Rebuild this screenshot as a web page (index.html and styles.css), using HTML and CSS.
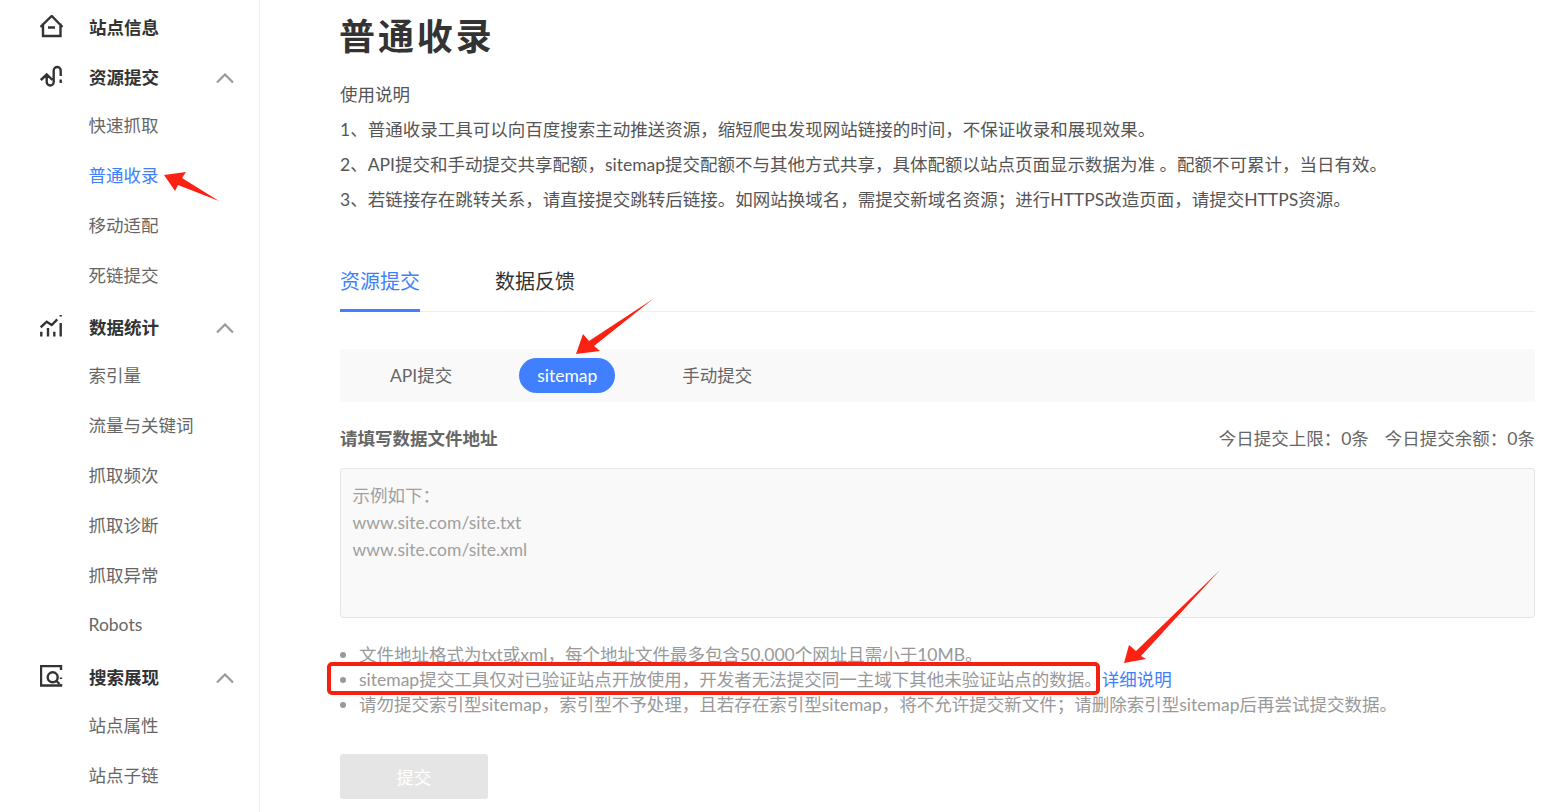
FILE: index.html
```html
<!DOCTYPE html>
<html lang="zh-CN">
<head>
<meta charset="utf-8">
<title>普通收录</title>
<link rel="stylesheet" href="styles.css">
</head>
<body>
<div class="page">
  <aside class="sidebar">
    <div class="nav-row nav-head">
      <svg class="nav-icon" viewBox="0 0 24 24"><path d="M.5 12 11.700 1 22.500 12M3 8.500V21h17.500V8.500M8 12.500h7" /></svg>
      <span>站点信息</span>
    </div>
    <div class="nav-row nav-head">
      <svg class="nav-icon" viewBox="0 0 24 24"><path d="M.8 15 6.700 9.500 12.500 15M6.700 10v7a3.500 3.500 0 0 0 7 0V5.500a3.500 3.500 0 0 1 7 0V11M20.700 14.500V18" /></svg>
      <span>资源提交</span>
      <svg class="chevron" viewBox="0 0 18 10"><path d="M1 9.500 9 1.500l8 8" /></svg>
    </div>
    <div class="nav-row nav-sub">快速抓取</div>
    <div class="nav-row nav-sub nav-active">普通收录</div>
    <div class="nav-row nav-sub">移动适配</div>
    <div class="nav-row nav-sub">死链提交</div>
    <div class="nav-row nav-head">
      <svg class="nav-icon" viewBox="0 0 24 24"><path d="M.7 12.300 6.700 6.700 11.700 10 17.300 4.300M1.300 16.700v4.800M8 13v8.500M14.300 16.700v4.800M20.700 8v13.500M20.700 0v1.500" /></svg>
      <span>数据统计</span>
      <svg class="chevron" viewBox="0 0 18 10"><path d="M1 9.500 9 1.500l8 8" /></svg>
    </div>
    <div class="nav-row nav-sub">索引量</div>
    <div class="nav-row nav-sub">流量与关键词</div>
    <div class="nav-row nav-sub">抓取频次</div>
    <div class="nav-row nav-sub">抓取诊断</div>
    <div class="nav-row nav-sub">抓取异常</div>
    <div class="nav-row nav-sub">Robots</div>
    <div class="nav-row nav-head">
      <svg class="nav-icon" viewBox="0 0 24 24"><path d="M21 5V1H1v19.500h20V19" /><circle cx="12.700" cy="12.300" r="5" /><path d="M16.500 16l3 3M21 12.500V14" /></svg>
      <span>搜索展现</span>
      <svg class="chevron" viewBox="0 0 18 10"><path d="M1 9.500 9 1.500l8 8" /></svg>
    </div>
    <div class="nav-row nav-sub">站点属性</div>
    <div class="nav-row nav-sub">站点子链</div>
  </aside>

  <main class="content">
    <h1 class="title">普通收录</h1>
    <div class="intro">
      <p>使用说明</p>
      <p>1、普通收录工具可以向百度搜索主动推送资源，缩短爬虫发现网站链接的时间，不保证收录和展现效果。</p>
      <p>2、API提交和手动提交共享配额，sitemap提交配额不与其他方式共享，具体配额以站点页面显示数据为准 。配额不可累计，当日有效。</p>
      <p>3、若链接存在跳转关系，请直接提交跳转后链接。如网站换域名，需提交新域名资源；进行HTTPS改造页面，请提交HTTPS资源。</p>
    </div>

    <div class="tabs">
      <div class="tab tab-active">资源提交</div>
      <div class="tab">数据反馈</div>
    </div>

    <div class="subtabs">
      <div class="subtab subtab-api">API提交</div>
      <div class="subtab subtab-on">sitemap</div>
      <div class="subtab subtab-manual">手动提交</div>
    </div>

    <div class="form-head">
      <strong class="form-label">请填写数据文件地址</strong>
      <div class="quota"><span>今日提交上限：0条</span><span>今日提交余额：0条</span></div>
    </div>

    <textarea class="addr" placeholder="示例如下：&#10;www.site.com/site.txt&#10;www.site.com/site.xml"></textarea>

    <ul class="notes">
      <li>文件地址格式为txt或xml，每个地址文件最多包含50,000个网址且需小于10MB。</li>
      <li>sitemap提交工具仅对已验证站点开放使用，开发者无法提交同一主域下其他未验证站点的数据。<a class="link">详细说明</a></li>
      <li>请勿提交索引型sitemap，索引型不予处理，且若存在索引型sitemap，将不允许提交新文件；请删除索引型sitemap后再尝试提交数据。</li>
    </ul>

    <button class="submit" disabled>提交</button>
  </main>

  <svg class="marks" viewBox="0 0 1554 812">
    <path class="mark-fill" d="M164 175 186 172 182 178 219 201 178 185 175 191Z" />
    <path class="mark-fill" d="M576 354 583 334 589 341 653 299 594 346 600 351Z" />
    <path class="mark-fill" d="M1124 663 1129 645 1136 651 1220 570 1141 656 1146 659Z" />
    <rect class="mark-box" x="329" y="664" width="769" height="29" rx="3" />
  </svg>
</div>
</body>
</html>
```
FILE: styles.css
```css
* { box-sizing: border-box; }
html, body { margin: 0; height: 100%; overflow: hidden; background: #fff; }
body { font-family: Lato, "Noto Sans CJK SC", "Liberation Sans", sans-serif; font-size: 17.5px; color: #333; }

.page { position: relative; display: flex; width: 1554px; height: 812px; overflow: hidden; }

.sidebar { flex: none; width: 260px; height: 812px; padding-top: 2px; border-right: 1px solid #eee; }
.nav-row { display: flex; align-items: center; height: 50px; padding-left: 89px; position: relative; }
.nav-head { font-weight: 700; color: #333; padding-bottom: 1px; }
.nav-sub { color: #666; padding-bottom: 5px; padding-left: 88.500px; }
.nav-active { color: #4080ff; }
.nav-icon { position: absolute; left: 40px; top: 13px; width: 24px; height: 24px; fill: none; stroke: #333; stroke-width: 2.400; }
.chevron { position: absolute; left: 216px; top: 21px; width: 18px; height: 10px; fill: none; stroke: #999; stroke-width: 2.200; }

.content { flex: none; width: 1195px; margin-left: 80px; }
.title { margin: 7px 0 0 -1px; font-size: 36px; line-height: 58px; letter-spacing: 2.900px; font-weight: 700; color: #333; }
.intro { margin-top: 12px; }
.intro p { margin: 0; height: 35px; line-height: 35px; color: #555; white-space: nowrap; }

.tabs { display: flex; gap: 75px; height: 64px; margin-top: 31px; border-bottom: 1px solid #eee; }
.tab { height: 64px; padding-top: 18px; font-size: 20px; line-height: 30px; color: #333; }
.tab-active { color: #4080ff; border-bottom: 3px solid #4080ff; }

.subtabs { display: flex; align-items: center; height: 53px; margin-top: 37px; background: #f9f9f9; color: #666; }
.subtab { line-height: 35px; white-space: nowrap; }
.subtab-api { margin-left: 50px; }
.subtab-on { width: 96px; height: 35px; margin-left: 67px; border-radius: 18px; background: #4080ff; color: #fff; text-align: center; }
.subtab-manual { margin-left: 67px; }

.form-head { display: flex; justify-content: space-between; align-items: center; height: 30px; margin-top: 20px; }
.form-label { color: #666; font-weight: 700; }
.quota { display: flex; gap: 16px; color: #666; }

.addr { display: block; width: 100%; height: 150px; margin: 16px 0 0; padding: 13px 11.500px; border: 1px solid #e5e5e5; border-radius: 3px; background: #f9f9f9; font: inherit; line-height: 27px; resize: none; outline: none; }
.addr::placeholder { color: #a0a0a0; opacity: 1; }

.notes { margin: 24px 0 0; padding: 0; list-style: none; color: #999; line-height: 25px; }
.notes li { position: relative; padding-left: 19px; white-space: nowrap; }
.notes li::before { content: ""; position: absolute; left: 0; top: 10px; width: 6px; height: 6px; border-radius: 50%; background: #999; }
.link { color: #4080ff; }

.submit { display: block; width: 148px; height: 45px; margin-top: 37px; padding: 0; border: 0; border-radius: 3px; background: #e5e5e5; color: #fff; font: inherit; }

.marks { position: absolute; left: 0; top: 0; width: 1554px; height: 812px; pointer-events: none; }
.mark-fill { fill: #fb2213; }
.mark-box { fill: none; stroke: #f5200f; stroke-width: 4; }
```
